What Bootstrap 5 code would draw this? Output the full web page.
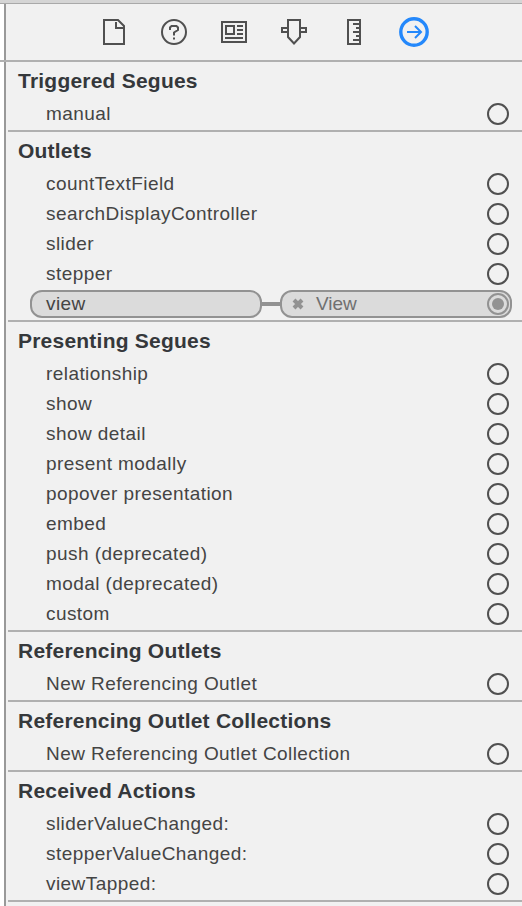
<!DOCTYPE html>
<html lang="en">
<head>
<meta charset="utf-8">
<meta name="viewport" content="width=device-width, initial-scale=1">
<title>Connections Inspector</title>
<link href="https://cdn.jsdelivr.net/npm/bootstrap@5.3.0/dist/css/bootstrap.min.css" rel="stylesheet">
<style>
body{font-family:"Liberation Sans",Arial,sans-serif;background:#f1f1f1;color:#444;height:906px;overflow:hidden;font-size:19px;letter-spacing:.43px}
.topstrip{height:4px;background:#d5d5d5;border-bottom:1px solid #a9a9a9}
.gutter{width:6px;background:#fff;border-right:2px solid #999}
.tools{height:58px;border-bottom:2px solid #b0b0b0}
.toolset{padding-left:93px;gap:30px;height:56px}
.toolset svg{width:30px;height:30px;fill:none;stroke:#505050;stroke-width:2;flex:none}
.sections{margin-left:2px}
.group{border-bottom:2px solid #b0b0b0;padding-bottom:1px}
.group h2{font-size:21px;font-weight:700;color:#35383b;height:37px;line-height:37px;margin:0;padding-left:10px;letter-spacing:.22px}
.entry{height:30px;line-height:30px;padding:0 13px 0 38px}
.ring{width:22px;height:22px;border:2px solid #505050;border-radius:50%;flex:none}
.linked{padding:0 10px 0 22px}
.pill{width:232px;height:28px;border:2px solid #929292;border-radius:12px;background:#dbdbdb;line-height:24px}
.source{padding-left:14px}
.wire{width:18px;height:4px;background:#929292}
.target{color:#707070;padding:0 1px 0 10px;letter-spacing:0}
.target .ring{border-color:#929292;padding:3px}
.dot{width:12px;height:12px;border-radius:50%;background:#929292}
</style>
<script src="https://cdn.jsdelivr.net/npm/bootstrap@5.3.0/dist/js/bootstrap.bundle.min.js"></script>
</head>
<body class="d-flex flex-column">
<div class="topstrip flex-shrink-0"></div>
<div class="tools d-flex flex-shrink-0">
  <div class="gutter"></div>
  <div class="toolset d-flex align-items-center">
    <svg viewBox="0 0 30 30"><path d="M5 3h14l6 6v18H5zM17 5v6h7"/></svg>
    <svg viewBox="0 0 30 30"><circle cx="15" cy="15" r="12"/><path d="M11 13v-2.500l1.500-1.500h5l1.500 1.500v2.500l-4 2.500v3M15 20.500v2"/></svg>
    <svg viewBox="0 0 30 30"><path d="M3 5h24v20H3zM7 9h8v8H7zM18 9h6M18 13h6M18 17h6M6 21h18"/></svg>
    <svg viewBox="0 0 30 30"><path d="M9 3h12v17l-6 6.500-6-6.500zM9 11H3v4h6M21 11h6v4h-6"/></svg>
    <svg viewBox="0 0 30 30"><path d="M9 3h12v24H9zM14 7h6M17 11h3M14 15h6M17 19h3M14 23h6"/></svg>
    <svg viewBox="0 0 30 30"><g stroke="#2488fb"><circle cx="15" cy="15" r="13.2" stroke-width="3.4"/><path d="M8 15h14M16 9l6 6-6 6"/></g></svg>
  </div>
</div>
<div class="d-flex flex-grow-1">
  <div class="gutter flex-shrink-0"></div>
  <main class="sections flex-grow-1">
    <section class="group"><h2>Triggered Segues</h2>
      <div class="entry d-flex align-items-center justify-content-between"><span>manual</span><i class="ring"></i></div>
    </section>
    <section class="group"><h2>Outlets</h2>
      <div class="entry d-flex align-items-center justify-content-between"><span>countTextField</span><i class="ring"></i></div>
      <div class="entry d-flex align-items-center justify-content-between"><span>searchDisplayController</span><i class="ring"></i></div>
      <div class="entry d-flex align-items-center justify-content-between"><span>slider</span><i class="ring"></i></div>
      <div class="entry d-flex align-items-center justify-content-between"><span>stepper</span><i class="ring"></i></div>
      <div class="entry linked d-flex align-items-center">
        <div class="pill source">view</div>
        <div class="wire"></div>
        <div class="pill target d-flex align-items-center">
          <svg width="12" height="12" viewBox="0 0 12 12" stroke="#929292" stroke-width="4"><path d="M2 2l8 8M10 2l-8 8"/></svg>
          <span class="ms-2 ps-1 me-auto">View</span><i class="ring"><b class="dot d-block"></b></i>
        </div>
      </div>
    </section>
    <section class="group"><h2>Presenting Segues</h2>
      <div class="entry d-flex align-items-center justify-content-between"><span>relationship</span><i class="ring"></i></div>
      <div class="entry d-flex align-items-center justify-content-between"><span>show</span><i class="ring"></i></div>
      <div class="entry d-flex align-items-center justify-content-between"><span>show detail</span><i class="ring"></i></div>
      <div class="entry d-flex align-items-center justify-content-between"><span>present modally</span><i class="ring"></i></div>
      <div class="entry d-flex align-items-center justify-content-between"><span>popover presentation</span><i class="ring"></i></div>
      <div class="entry d-flex align-items-center justify-content-between"><span>embed</span><i class="ring"></i></div>
      <div class="entry d-flex align-items-center justify-content-between"><span>push (deprecated)</span><i class="ring"></i></div>
      <div class="entry d-flex align-items-center justify-content-between"><span>modal (deprecated)</span><i class="ring"></i></div>
      <div class="entry d-flex align-items-center justify-content-between"><span>custom</span><i class="ring"></i></div>
    </section>
    <section class="group"><h2>Referencing Outlets</h2>
      <div class="entry d-flex align-items-center justify-content-between"><span>New Referencing Outlet</span><i class="ring"></i></div>
    </section>
    <section class="group"><h2>Referencing Outlet Collections</h2>
      <div class="entry d-flex align-items-center justify-content-between"><span>New Referencing Outlet Collection</span><i class="ring"></i></div>
    </section>
    <section class="group"><h2>Received Actions</h2>
      <div class="entry d-flex align-items-center justify-content-between"><span>sliderValueChanged:</span><i class="ring"></i></div>
      <div class="entry d-flex align-items-center justify-content-between"><span>stepperValueChanged:</span><i class="ring"></i></div>
      <div class="entry d-flex align-items-center justify-content-between"><span>viewTapped:</span><i class="ring"></i></div>
    </section>
  </main>
</div>
</body>
</html>
